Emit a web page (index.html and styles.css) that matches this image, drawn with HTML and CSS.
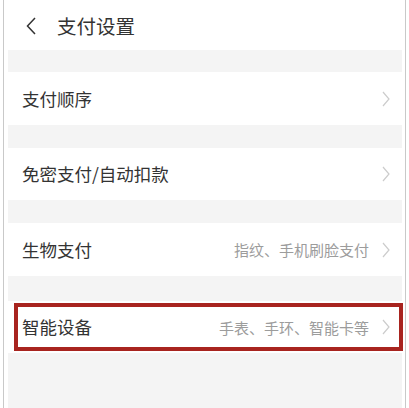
FILE: index.html
```html
<!DOCTYPE html>
<html lang="zh">
<head>
<meta charset="utf-8">
<link rel="stylesheet" href="styles.css">
</head>
<body>
<div class="frame">
  <header class="header">
    <svg class="back" width="12" height="18" viewBox="0 0 12 18"><path d="M10 1 L2.5 9 L10 17" fill="none" stroke="#333" stroke-width="1.5"/></svg>
    <span class="title">支付设置</span>
  </header>
  <div class="list">
    <div class="band b1"></div>
    <div class="row r1"><span class="label">支付顺序</span><svg class="chev" width="8" height="16" viewBox="0 0 8 16"><path d="M1 1 L7 8 L1 15" fill="none" stroke="#cccccc" stroke-width="1.2"/></svg></div>
    <div class="band b2"></div>
    <div class="row r2"><span class="label">免密支付/自动扣款</span><svg class="chev" width="8" height="16" viewBox="0 0 8 16"><path d="M1 1 L7 8 L1 15" fill="none" stroke="#cccccc" stroke-width="1.2"/></svg></div>
    <div class="band b3"></div>
    <div class="row r3"><span class="label">生物支付</span><span class="value">指纹、手机刷脸支付</span><svg class="chev" width="8" height="16" viewBox="0 0 8 16"><path d="M1 1 L7 8 L1 15" fill="none" stroke="#cccccc" stroke-width="1.2"/></svg></div>
    <div class="band b4"></div>
    <div class="row r4"><span class="label">智能设备</span><span class="value">手表、手环、智能卡等</span><svg class="chev" width="8" height="16" viewBox="0 0 8 16"><path d="M1 1 L7 8 L1 15" fill="none" stroke="#cccccc" stroke-width="1.2"/></svg><div class="mark"></div></div>
  </div>
</div>
</body>
</html>
```
FILE: styles.css
```css
html, body {
  margin: 0;
  padding: 0;
  background: #fff;
}
body {
  font-family: "Noto Sans CJK SC", "Noto Sans", sans-serif;
  color: #333;
}
.frame {
  margin-left: 3px;
  width: 403px;
  height: 408px;
  box-sizing: border-box;
  border-left: 1px solid #c9c9c9;
  border-right: 1px solid #c9c9c9;
  padding: 0 3px 0 4px;
  display: flex;
  flex-direction: column;
  overflow: hidden;
}
.header {
  height: 50px;
  flex: none;
  display: flex;
  align-items: center;
  padding-left: 17px;
  box-sizing: border-box;
}
.back {
  display: block;
  margin-top: 1px;
}
.title {
  margin-left: 20px;
  font-size: 19.5px;
  color: #333;
  line-height: 1;
  margin-top: 1px;
}
.list {
  flex: 1;
  background: #f4f4f4;
  display: flex;
  flex-direction: column;
}
.band { flex: none; }
.b1 { height: 22px; }
.b2, .b3 { height: 23px; }
.b4 { height: 25px; }
.row {
  position: relative;
  flex: none;
  height: 53px;
  background: #fff;
  display: flex;
  align-items: center;
  padding: 0 12px 0 14px;
  box-sizing: border-box;
}
.r2, .r4 { height: 52px; }
.label {
  font-size: 17.5px;
  color: #333;
  line-height: 1;
  flex: 1;
}
.value {
  font-size: 15px;
  color: #9c9c9c;
  line-height: 1;
  margin-right: 13px;
}
.chev {
  display: block;
  flex: none;
}
.mark {
  position: absolute;
  left: 6px;
  right: -1px;
  top: 2px;
  bottom: 2px;
  border: 4px solid #a8241f;
}
```
